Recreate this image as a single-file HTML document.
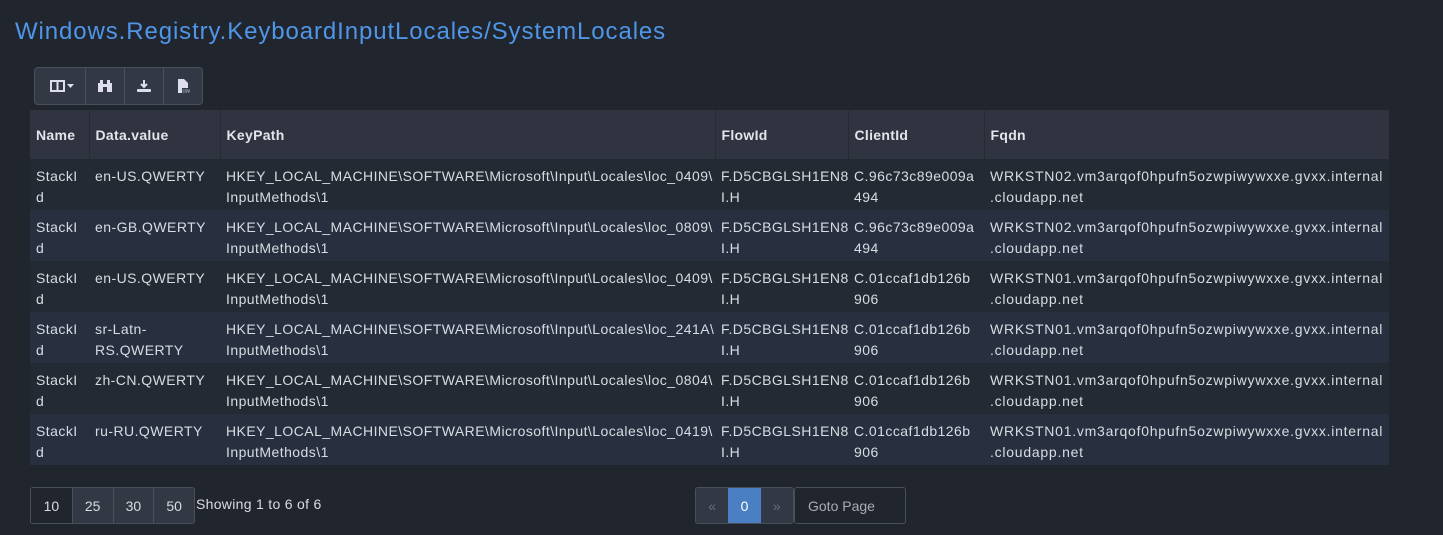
<!DOCTYPE html>
<html><head><meta charset="utf-8"><style>
*{box-sizing:border-box;margin:0;padding:0}
body{width:1443px;height:535px;background:#21252d;font-family:"Liberation Sans","DejaVu Sans",sans-serif;color:#d8dce2;position:relative;overflow:hidden}
.t{position:absolute;left:15px;top:18px;font-size:24px;color:#4f96e8;letter-spacing:0.9px}
.tb{position:absolute;left:34px;top:67px;height:38px;display:flex;border:1px solid #4a505a;border-radius:4px;overflow:hidden;background:#323844}
.tb div{height:36px;border-left:1px solid #4a505a;display:flex;align-items:center;justify-content:center}
.tb div:first-child{border-left:none}
table{position:absolute;left:30px;top:110px;border-collapse:collapse;font-size:14px;width:1359px;table-layout:fixed}
th{height:49px;background:#2f3440;text-align:left;padding:0 6px;font-weight:bold;border-left:1px solid #272b33;color:#e2e5ea;letter-spacing:0.3px}
td{height:51px;padding:7px 6px 0;vertical-align:top;line-height:21px;white-space:nowrap;letter-spacing:0.45px;overflow:visible}
td:last-child{letter-spacing:0.75px}
tr.a td{background:#242a33}
tr.b td{background:#283040}
.pg{position:absolute;top:487px;height:37px;display:flex;border:1px solid #4a505a;border-radius:3px;overflow:hidden;font-size:14px}
.pg div{display:flex;align-items:center;justify-content:center;border-left:1px solid #4a505a;background:#323844}
</style></head><body>
<div class="t">Windows.Registry.KeyboardInputLocales/SystemLocales</div>
<div class="tb">
<div style="width:50px"><svg width="30" height="14"><rect x="6" y="2" width="13" height="10" fill="none" stroke="#dde" stroke-width="2"/><line x1="12.5" y1="2" x2="12.5" y2="12" stroke="#dde" stroke-width="2"/><path d="M22 5h7l-3.5 4z" fill="#dde"/></svg></div>
<div style="width:39px"><svg width="16" height="14"><rect x="1" y="4" width="5" height="9" fill="#dde"/><rect x="10" y="4" width="5" height="9" fill="#dde"/><rect x="3" y="1" width="3" height="4" fill="#dde"/><rect x="10" y="1" width="3" height="4" fill="#dde"/><rect x="6" y="5" width="4" height="3" fill="#dde"/></svg></div>
<div style="width:39px"><svg width="16" height="14"><path d="M8 1v7M5 5l3 3 3-3" stroke="#dde" stroke-width="2" fill="none"/><rect x="1" y="10" width="14" height="3" rx="1" fill="#dde"/></svg></div>
<div style="width:39px"><svg width="16" height="16"><path d="M3 1h6l4 4v10H3z" fill="#dde"/><rect x="7" y="10" width="9" height="5" fill="#323844"/><text x="7.5" y="14.5" font-size="5" fill="#dde" font-family="Liberation Sans">csv</text></svg></div>
</div>
<table>
<tr><th style="width:59px;border-left:none">Name</th><th style="width:131px">Data.value</th><th style="width:495px">KeyPath</th><th style="width:133px">FlowId</th><th style="width:136px">ClientId</th><th>Fqdn</th></tr>
<tr class="a"><td>StackI<br>d</td><td>en-US.QWERTY</td><td>HKEY_LOCAL_MACHINE\SOFTWARE\Microsoft\Input\Locales\loc_0409\<br>InputMethods\1</td><td>F.D5CBGLSH1EN8<br>I.H</td><td>C.96c73c89e009a<br>494</td><td>WRKSTN02.vm3arqof0hpufn5ozwpiwywxxe.gvxx.internal<br>.cloudapp.net</td></tr>
<tr class="b"><td>StackI<br>d</td><td>en-GB.QWERTY</td><td>HKEY_LOCAL_MACHINE\SOFTWARE\Microsoft\Input\Locales\loc_0809\<br>InputMethods\1</td><td>F.D5CBGLSH1EN8<br>I.H</td><td>C.96c73c89e009a<br>494</td><td>WRKSTN02.vm3arqof0hpufn5ozwpiwywxxe.gvxx.internal<br>.cloudapp.net</td></tr>
<tr class="a"><td>StackI<br>d</td><td>en-US.QWERTY</td><td>HKEY_LOCAL_MACHINE\SOFTWARE\Microsoft\Input\Locales\loc_0409\<br>InputMethods\1</td><td>F.D5CBGLSH1EN8<br>I.H</td><td>C.01ccaf1db126b<br>906</td><td>WRKSTN01.vm3arqof0hpufn5ozwpiwywxxe.gvxx.internal<br>.cloudapp.net</td></tr>
<tr class="b"><td>StackI<br>d</td><td>sr-Latn-<br>RS.QWERTY</td><td>HKEY_LOCAL_MACHINE\SOFTWARE\Microsoft\Input\Locales\loc_241A\<br>InputMethods\1</td><td>F.D5CBGLSH1EN8<br>I.H</td><td>C.01ccaf1db126b<br>906</td><td>WRKSTN01.vm3arqof0hpufn5ozwpiwywxxe.gvxx.internal<br>.cloudapp.net</td></tr>
<tr class="a"><td>StackI<br>d</td><td>zh-CN.QWERTY</td><td>HKEY_LOCAL_MACHINE\SOFTWARE\Microsoft\Input\Locales\loc_0804\<br>InputMethods\1</td><td>F.D5CBGLSH1EN8<br>I.H</td><td>C.01ccaf1db126b<br>906</td><td>WRKSTN01.vm3arqof0hpufn5ozwpiwywxxe.gvxx.internal<br>.cloudapp.net</td></tr>
<tr class="b"><td>StackI<br>d</td><td>ru-RU.QWERTY</td><td>HKEY_LOCAL_MACHINE\SOFTWARE\Microsoft\Input\Locales\loc_0419\<br>InputMethods\1</td><td>F.D5CBGLSH1EN8<br>I.H</td><td>C.01ccaf1db126b<br>906</td><td>WRKSTN01.vm3arqof0hpufn5ozwpiwywxxe.gvxx.internal<br>.cloudapp.net</td></tr>
</table>
<div class="pg" style="left:30px;width:165px">
<div style="width:41px;border-left:none;background:#21252d">10</div><div style="width:41px">25</div><div style="width:41px">30</div><div style="width:41px">50</div></div>
<div style="position:absolute;left:196px;top:496px;font-size:14px;letter-spacing:0.3px">Showing 1 to 6 of 6</div>
<div class="pg" style="left:695px;width:99px">
<div style="width:33px;border-left:none;color:#6a707a">«</div><div style="width:33px;background:#4a7fc4;border-left:none;color:#fff">0</div><div style="width:33px;border-left:none;color:#6a707a">»</div></div>
<div class="pg" style="left:794px;width:112px;background:#21252d;padding-left:13px;align-items:center;color:#a8adb5">Goto Page</div>
</body></html>
